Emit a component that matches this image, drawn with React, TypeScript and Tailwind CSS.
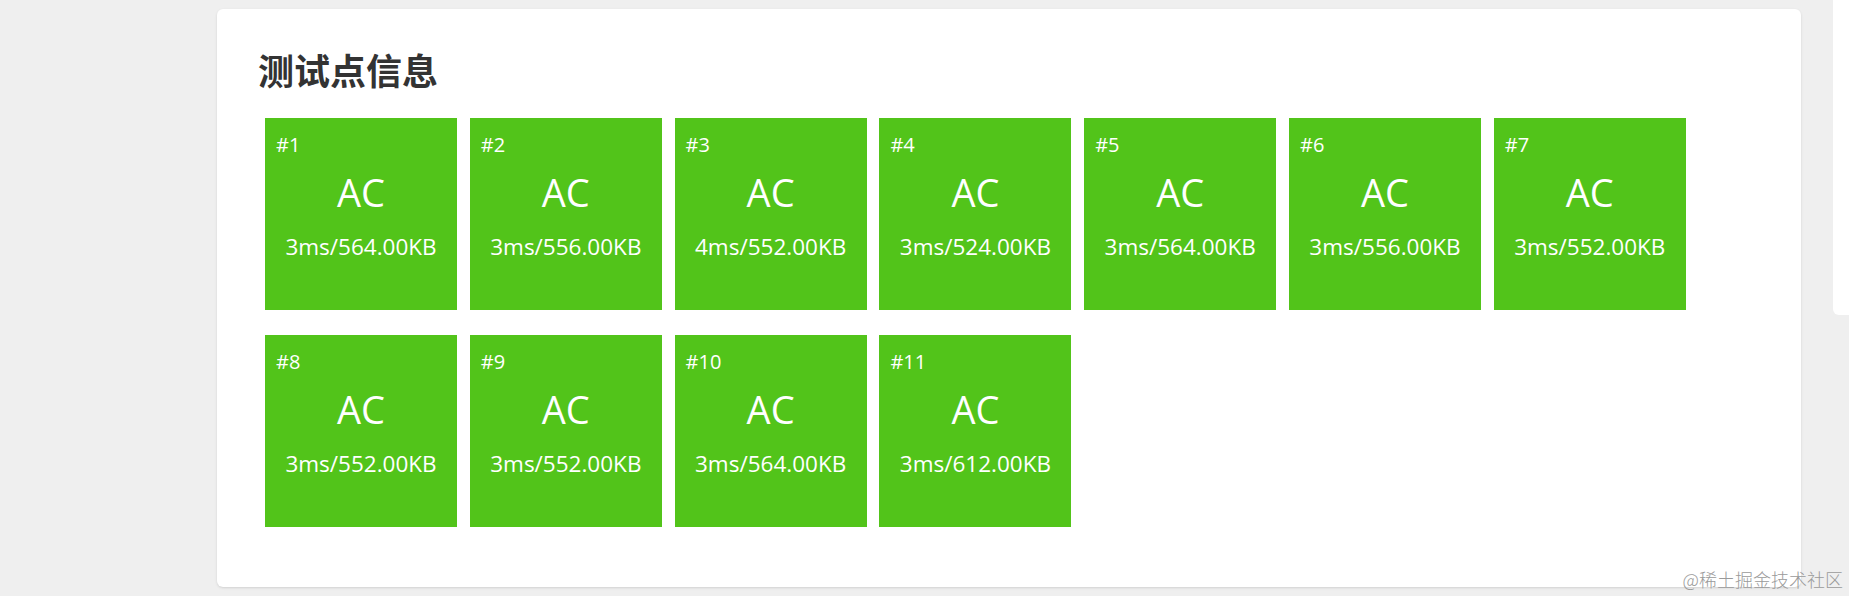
import React from "react";

const cases = [
    { id: 1, time: 3, mem: "564.00" },
    { id: 2, time: 3, mem: "556.00" },
    { id: 3, time: 4, mem: "552.00" },
    { id: 4, time: 3, mem: "524.00" },
    { id: 5, time: 3, mem: "564.00" },
    { id: 6, time: 3, mem: "556.00" },
    { id: 7, time: 3, mem: "552.00" },
    { id: 8, time: 3, mem: "552.00" },
    { id: 9, time: 3, mem: "552.00" },
    { id: 10, time: 3, mem: "564.00" },
    { id: 11, time: 3, mem: "612.00" },
];

function CaseBox({ id, time, mem }: { id: number; time: number; mem: string }) {
    return (
        <div className="w-[192px] h-[192px] bg-[#52c41a] text-white flex flex-col px-[11px] pt-[17px] font-['Open_Sans',sans-serif]">
            <div className="text-[20px] leading-[20px]">#{id}</div>
            <div className="mt-[18px] text-center text-[38px] leading-[38px]">AC</div>
            <div className="mt-[25px] text-center text-[22.5px] leading-[22px] whitespace-nowrap">
                {time}ms/{mem}KB
            </div>
        </div>
    );
}

export default function App() {
    return (
        <div className="relative h-[596px] w-full overflow-hidden bg-[#efefef] flex items-start pl-[217px]">
            {/* main card */}
            <div className="mt-[9px] w-[1584px] h-[578px] shrink-0 bg-white rounded-md shadow-sm pt-[42px] pl-[41px]">
                <h2 className="text-[36px] leading-[36px] font-bold text-[#333] font-['Noto_Sans_CJK_SC',sans-serif]">
                    测试点信息
                </h2>
                <div className="mt-[31px] ml-[7px] grid grid-cols-[repeat(7,192px)] gap-x-[12.8px] gap-y-[25px]">
                    {cases.map((c) => (
                        <CaseBox key={c.id} {...c} />
                    ))}
                </div>
            </div>

            {/* side panel */}
            <div className="ml-[32px] w-[300px] h-[315px] shrink-0 bg-white rounded-bl-md" />

            {/* watermark */}
            <div className="absolute right-[6px] bottom-[7px] text-[18px] leading-[20px] text-[#9a9a9a] font-['Noto_Sans_CJK_SC',sans-serif] font-light">
                @稀土掘金技术社区
            </div>
        </div>
    );
}
